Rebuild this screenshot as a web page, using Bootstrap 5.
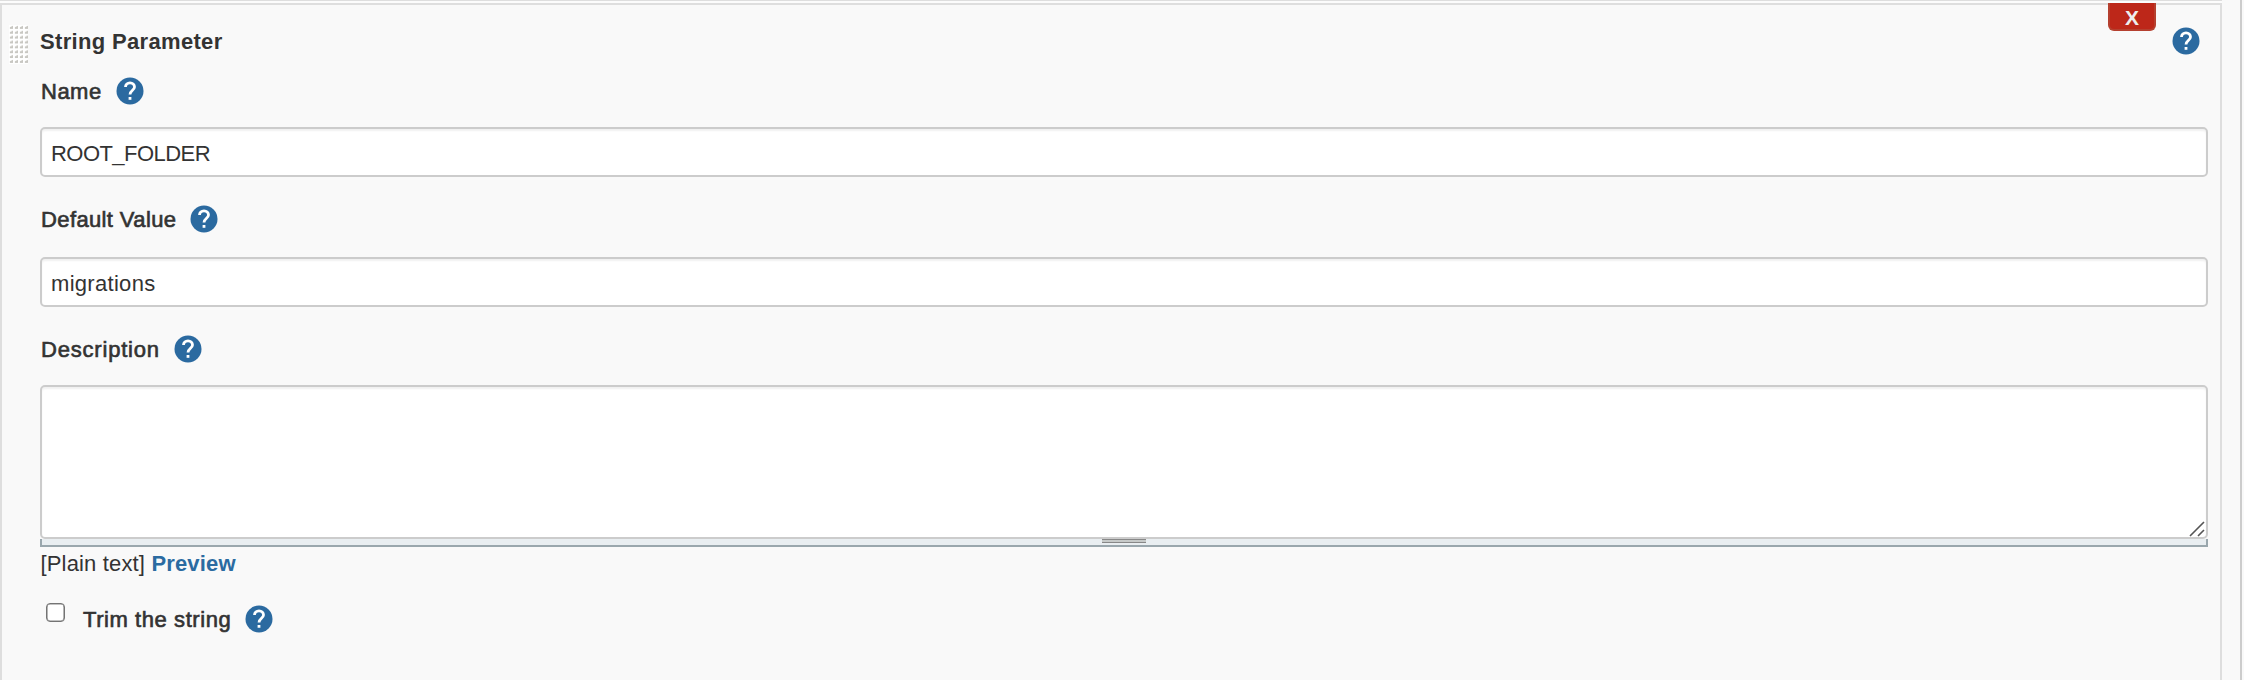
<!DOCTYPE html>
<html lang="en">
<head>
<meta charset="utf-8">
<title>String Parameter</title>
<link rel="stylesheet" href="https://cdn.jsdelivr.net/npm/bootstrap@5.3.0/dist/css/bootstrap.min.css">
<style>
body{background:#f9f9f9;color:#333;font-family:"Liberation Sans",sans-serif;font-size:22px;line-height:28px}
.page{width:2242px;height:680px;border-right:2px solid #ccc}
.previous{width:2222px;height:3px;border-top:1px solid #dedede;background:#fcfcfc}
.param{width:2222px;height:677px;border:2px solid #dedede;border-bottom:0;padding:22px 12px 0 38px}
.grip{left:7px;top:20px}
.help{width:32px;height:32px;flex:none}
.remove{left:2106px;top:-2px;width:48px;height:28px;background:#bd2719;border:2px solid #b5402f;border-top:0;border-radius:0 0 6px 6px;color:#eee;font-size:21px;line-height:30px}
.row-title{height:28px;letter-spacing:.33px}
.row-title span{padding-top:2px}
.row-title .help{margin-right:6px}
.field-label{height:32px;-webkit-text-stroke:.65px #333;gap:12px}
.field-label label{padding:1px 0 0 1px}
.ls-name{letter-spacing:.5px}.ls-default{letter-spacing:.38px}.ls-desc{letter-spacing:.8px}.ls-trim{letter-spacing:.57px}
.form-control.box,.form-control.box:focus{height:50px;padding:3px 8px 0 9px;border:2px solid #ccc;border-radius:5px;background:#fff;color:#333;font-size:22px;box-shadow:inset 0 2px 2px rgba(0,0,0,.06)}
.form-control.box.wide-caps{letter-spacing:-.55px}
.form-control.box.lower{letter-spacing:.3px}
.form-control.area{height:154px;resize:none}
.drag{height:8px;border:2px solid #9aa7ad;border-top:0;background:#e9eef1}
.drag span{width:44px;height:4px;border:solid #888;border-width:1px 0;background:#c7cac9}
.corner{right:3px;bottom:2px}
.markup{letter-spacing:.16px;padding:1px 0 0 .5px}
.preview{color:#2b6ba1}
.form-check-input.tick{width:19px;height:19px;margin:0;border:1px solid #747474;border-radius:4px;background:#fff;box-shadow:inset 0 0 0 .6px #858585}
</style>
</head>
<body>
<svg width="0" height="0" class="position-absolute" aria-hidden="true">
<symbol id="q" viewBox="0 0 32 32"><circle cx="16" cy="16" r="13.5" fill="#2b6aa0"/><path d="M11.5 12.1C11.5 9.5 13.4 7.8 16 7.8S20.5 9.5 20.5 12.1C20.5 15.1 16 15.5 16 19.5" fill="none" stroke="#fff" stroke-width="2.8"/><path d="M14.6 22h2.8v2.8h-2.8z" fill="#fff"/></symbol>
<pattern id="dots" width="5" height="4.86" patternUnits="userSpaceOnUse"><path d="M0 0h5v4.86H0z" fill="#fff"/><path d="M.9 4V2.3L4 .8V4z" fill="#c8c7c2"/></pattern>
</svg>
<div class="page">
<div class="previous"></div>
<section class="param position-relative">
  <svg class="grip position-absolute" width="19" height="39"><path d="M0 0h19v39H0z" fill="url(#dots)"/></svg>
  <button class="remove position-absolute p-0 fw-bold text-center" type="button" aria-label="Remove">X</button>
  <div class="row-title d-flex align-items-center justify-content-between fw-bold"><span>String Parameter</span><svg class="help"><use href="#q"/></svg></div>
  <div class="field-label d-flex align-items-center" style="margin-top:20px"><label for="name" class="ls-name">Name</label><svg class="help"><use href="#q"/></svg></div>
  <input id="name" class="form-control box wide-caps" style="margin-top:20px" value="ROOT_FOLDER">
  <div class="field-label d-flex align-items-center" style="margin-top:26px"><label for="value" class="ls-default">Default Value</label><svg class="help"><use href="#q"/></svg></div>
  <input id="value" class="form-control box lower" style="margin-top:22px" value="migrations">
  <div class="field-label d-flex align-items-center" style="margin-top:26px"><label for="desc" class="ls-desc">Description</label><svg class="help"><use href="#q"/></svg></div>
  <div class="position-relative" style="margin-top:20px">
    <textarea id="desc" class="form-control box area d-block"></textarea>
    <svg class="corner position-absolute" width="16" height="16"><path d="M1 15L15 1M9 15l6-6" stroke="#555" stroke-width="1.6" fill="none"/></svg>
  </div>
  <div class="drag d-flex justify-content-center"><span></span></div>
  <div class="markup" style="margin-top:2px">[Plain text] <a href="#" class="preview fw-bold text-decoration-none">Preview</a></div>
  <div class="d-flex" style="margin-top:25px;padding-left:6px">
    <input type="checkbox" id="trim" class="form-check-input tick">
    <div class="field-label d-flex align-items-center" style="margin-left:17px"><label for="trim" class="ls-trim">Trim the string</label><svg class="help"><use href="#q"/></svg></div>
  </div>
</section>
</div>
<script src="https://cdn.jsdelivr.net/npm/bootstrap@5.3.0/dist/js/bootstrap.bundle.min.js"></script>
</body>
</html>
